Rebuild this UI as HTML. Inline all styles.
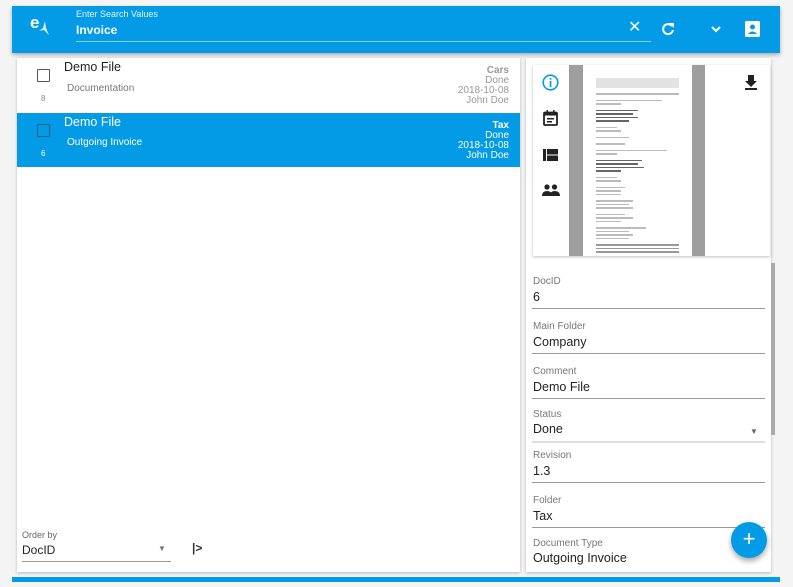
<!DOCTYPE html>
<html><head><style>
*{box-sizing:border-box;margin:0;padding:0}
body{width:793px;height:587px;background:#f4f4f4;font-family:"Liberation Sans",sans-serif;position:relative;overflow:hidden}
.abs{position:absolute}
.hdr{left:12px;top:6px;width:768px;height:47px;background:#039be5;box-shadow:0 2px 4px rgba(0,0,0,.3)}
.panel{background:#fff;box-shadow:0 1px 3px rgba(0,0,0,.25)}
.t{position:absolute;white-space:nowrap}
.lbl{font-size:10px;color:#777}
.val{font-size:12.5px;color:#222}
.ul{position:absolute;left:532px;width:233px;height:1px;background:#999}
.pg div{height:1.5px;margin:2px 0;background:#bbb}
.pg div.d{background:#666}
.pg div.s{margin-top:5px}
</style></head><body>
<div class="abs hdr">
 <div class="t" style="left:18px;top:7px;color:#fff;font-size:17px;font-weight:bold">e</div>
 <svg class="abs" style="left:26px;top:14px" width="12" height="16"><path d="M7 1 L5 8 L1 11 L6 10 L11 15 L8 8 Z" fill="#d7efff"/></svg>
 <div class="t" style="left:64px;top:3px;color:#e6f4fc;font-size:9px">Enter Search Values</div>
 <div class="t" style="left:64px;top:17px;color:#fff;font-size:12px;font-weight:bold">Invoice</div>
 <div class="abs" style="left:64px;top:35px;width:575px;height:1px;background:#8fd0f2"></div>
 <div class="t" style="left:616px;top:11px;color:#fff;font-size:16px">✕</div>
 <svg class="abs" style="left:649px;top:16px" width="14" height="14"><path d="M11 4 A5 5 0 1 0 12 8" stroke="#fff" stroke-width="2" fill="none"/><path d="M8 1 L13 1 L13 6 Z" fill="#fff"/></svg>
 <svg class="abs" style="left:699px;top:19px" width="10" height="8"><path d="M1 2 L5 6 L9 2" stroke="#fff" stroke-width="2" fill="none"/></svg>
 <svg class="abs" style="left:733px;top:15px" width="15" height="16"><rect x="0" y="0" width="15" height="16" rx="1.5" fill="#fff"/><circle cx="7.5" cy="6" r="2.5" fill="#039be5"/><path d="M3 13 Q7.5 8 12 13 Z" fill="#039be5"/></svg>
</div>

<div class="abs panel" style="left:17px;top:58px;width:503px;height:514px">
 <div class="abs" style="left:20px;top:11px;width:13px;height:13px;border:1.5px solid #555;border-radius:1px"></div>
 <div class="t" style="left:24px;top:36px;font-size:8px;color:#888">8</div>
 <div class="t" style="left:47px;top:2px;font-size:12.5px;color:#222">Demo File</div>
 <div class="t" style="left:50px;top:25px;font-size:10px;color:#777">Documentation</div>
 <div class="t" style="right:11px;top:8px;font-size:10px;color:#999;text-align:right;line-height:10px"><b>Cars</b><br>Done<br>2018-10-08<br>John Doe</div>
 <div class="abs" style="left:0;top:55px;width:503px;height:54px;background:#039be5">
  <div class="abs" style="left:20px;top:11px;width:13px;height:13px;border:1.5px solid #1f5f86;border-radius:1px"></div>
  <div class="t" style="left:24px;top:36px;font-size:8px;color:#fff">6</div>
  <div class="t" style="left:47px;top:2px;font-size:12.5px;color:#fff">Demo File</div>
  <div class="t" style="left:50px;top:24px;font-size:10px;color:#fff">Outgoing Invoice</div>
  <div class="t" style="right:11px;top:8px;font-size:10px;color:#fff;text-align:right;line-height:10px"><b>Tax</b><br>Done<br>2018-10-08<br>John Doe</div>
 </div>
 <div class="t" style="left:5px;top:472px;font-size:9px;color:#666">Order by</div>
 <div class="t" style="left:5px;top:485px;font-size:12px;color:#222">DocID</div>
 <div class="t" style="left:141px;top:486px;font-size:8px;color:#777">▼</div>
 <div class="abs" style="left:5px;top:503px;width:149px;height:1px;background:#999"></div>
 <div class="t" style="left:175px;top:483px;font-size:12px;color:#333;font-weight:bold">|&gt;</div>
</div>

<div class="abs panel" style="left:526px;top:58px;width:245px;height:514px"></div>
<div class="abs panel" style="left:533px;top:65px;width:237px;height:191px;overflow:hidden">
 <svg class="abs" style="left:9px;top:9px" width="17" height="17"><circle cx="8.5" cy="8.5" r="7.3" stroke="#039be5" stroke-width="1.6" fill="none"/><rect x="7.7" y="7" width="1.7" height="6" fill="#039be5"/><rect x="7.7" y="4" width="1.7" height="1.7" fill="#039be5"/></svg>
 <svg class="abs" style="left:10px;top:45px" width="15" height="16"><rect x="1" y="2.5" width="13" height="12.5" rx="1" stroke="#222" stroke-width="1.8" fill="none"/><rect x="1" y="2.5" width="13" height="3" fill="#222"/><rect x="3.5" y="0" width="1.5" height="3" fill="#222"/><rect x="10" y="0" width="1.5" height="3" fill="#222"/><rect x="4" y="8" width="7" height="1.5" fill="#222"/><rect x="4" y="11" width="5" height="1.5" fill="#222"/></svg>
 <svg class="abs" style="left:10px;top:84px" width="15" height="12"><rect x="0" y="0" width="3" height="12" fill="#222"/><rect x="4" y="0" width="11" height="5.5" fill="#222"/><rect x="4" y="6.5" width="11" height="5.5" fill="#222"/></svg>
 <svg class="abs" style="left:9px;top:119px" width="18" height="12"><circle cx="5" cy="3" r="2.6" fill="#222"/><circle cx="12.5" cy="3" r="2.6" fill="#222"/><path d="M0 12 Q0 7 5 7 Q10 7 10 12Z M8 12 Q8 7 12.5 7 Q18 7 18 12Z" fill="#222"/></svg>
 <div class="abs" style="left:36px;top:0;width:136px;height:191px;background:#9e9e9e"></div>
 <div class="abs pg" style="left:50px;top:0;width:109px;height:191px;background:#fff;padding:11px 13px;overflow:hidden">
  <div style="height:10px;background:#e2e2e2"></div>
  <div class="s"></div><div class="s" style="width:80%"></div><div style="width:30%"></div>
  <div class="d s" style="width:50%"></div><div class="d" style="width:45%"></div><div class="d" style="width:50%"></div><div class="d" style="width:40%"></div>
  <div class="s" style="width:25%"></div><div style="width:30%"></div>
  <div class="s" style="width:40%"></div>
  <div class="s" style="width:35%"></div>
  <div class="s" style="width:85%"></div><div style="width:25%"></div>
  <div class="d s" style="width:55%"></div><div class="d" style="width:50%"></div><div class="d" style="width:58%"></div><div class="d" style="width:30%"></div>
  <div class="s" style="width:25%"></div><div style="width:30%"></div>
  <div class="s" style="width:35%"></div><div style="width:30%"></div><div style="width:30%"></div>
  <div class="s" style="width:45%"></div><div style="width:40%"></div><div style="width:45%"></div>
  <div class="s" style="width:35%"></div><div style="width:45%"></div><div style="width:30%"></div>
  <div class="s" style="width:60%"></div><div style="width:40%"></div><div style="width:45%"></div><div style="width:40%"></div>
  <div class="s" style="background:#999"></div><div style="background:#999"></div><div style="background:#999"></div>
 </div>
 <svg class="abs" style="left:211px;top:10px" width="14" height="15"><path d="M4 0 H10 V6 H13 L7 12 L1 6 H4Z" fill="#222"/><rect x="1" y="13" width="12" height="2" fill="#222"/></svg>
</div>
<div class="abs" style="left:771px;top:263px;width:4px;height:172px;background:#aaa"></div>

<div class="t lbl" style="left:533px;top:276px">DocID</div><div class="t val" style="left:533px;top:290px">6</div><div class="ul" style="top:308px"></div>
<div class="t lbl" style="left:533px;top:321px">Main Folder</div><div class="t val" style="left:533px;top:335px">Company</div><div class="ul" style="top:353px"></div>
<div class="t lbl" style="left:533px;top:366px">Comment</div><div class="t val" style="left:533px;top:380px">Demo File</div><div class="ul" style="top:398px"></div>
<div class="t lbl" style="left:533px;top:409px">Status</div><div class="t val" style="left:533px;top:422px">Done</div><div class="t" style="left:750px;top:427px;font-size:8px;color:#666">▼</div><div class="ul" style="top:441px;height:2px;background:#ddd"></div>
<div class="t lbl" style="left:533px;top:450px">Revision</div><div class="t val" style="left:533px;top:464px">1.3</div><div class="ul" style="top:482px"></div>
<div class="t lbl" style="left:533px;top:495px">Folder</div><div class="t val" style="left:533px;top:509px">Tax</div><div class="ul" style="top:527px"></div>
<div class="t lbl" style="left:533px;top:538px">Document Type</div><div class="t val" style="left:533px;top:551px">Outgoing Invoice</div>
<div class="abs" style="left:731px;top:522px;width:36px;height:36px;border-radius:50%;background:#039be5;box-shadow:0 3px 6px rgba(0,0,0,.35);color:#fff;font-size:22px;text-align:center;line-height:34px">+</div>
<div class="abs" style="left:12px;top:577px;width:768px;height:5px;background:#039be5"></div>
</body></html>
